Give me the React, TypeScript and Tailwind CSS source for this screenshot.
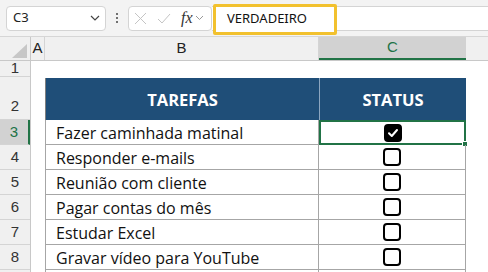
import React from "react";

const tasks = [
  { n: 3, text: "Fazer caminhada matinal", done: true },
  { n: 4, text: "Responder e-mails", done: false },
  { n: 5, text: "Reunião com cliente", done: false },
  { n: 6, text: "Pagar contas do mês", done: false },
  { n: 7, text: "Estudar Excel", done: false },
  { n: 8, text: "Gravar vídeo para YouTube", done: false },
];

function Checkbox({ checked }: { checked: boolean }) {
  return (
    <div
      className={
        "w-[18px] h-[18px] rounded-[4px] border-2 border-black flex items-center justify-center " +
        (checked ? "bg-black" : "bg-white")
      }
    >
      {checked && (
        <svg width="12" height="12" viewBox="0 0 12 12">
          <path d="M2 6.2 L4.8 9 L10 3" fill="none" stroke="white" strokeWidth="2" strokeLinecap="round" strokeLinejoin="round" />
        </svg>
      )}
    </div>
  );
}

export default function App() {
  return (
    <div className="w-[488px] h-[272px] overflow-hidden bg-white" style={{ fontFamily: "'Noto Sans', 'Liberation Sans', sans-serif" }}>
      {/* Formula bar */}
      <div className="h-[37px] bg-[#f3f3f3] flex items-center pl-[6px] border-b border-[#d6d6d6]">
        <div className="w-[100px] h-[25px] bg-white border border-[#d4d4d4] rounded-[4px] flex items-center justify-between pl-[6px] pr-[5px] text-[13px] text-[#222]">
          <span>C3</span>
          <svg width="10" height="6" viewBox="0 0 10 6">
            <path d="M1 1 L5 5 L9 1" fill="none" stroke="#444" strokeWidth="1.2" />
          </svg>
        </div>
        <div className="w-[22px] flex flex-col items-center justify-center gap-[2px]">
          <span className="w-[2px] h-[2px] bg-[#444] rounded-full" />
          <span className="w-[2px] h-[2px] bg-[#444] rounded-full" />
          <span className="w-[2px] h-[2px] bg-[#444] rounded-full" />
        </div>
        <div className="w-[84px] h-[25px] bg-white border border-[#d4d4d4] rounded-[4px] flex items-center pl-[5px] gap-[10px]">
          <svg width="13" height="13" viewBox="0 0 13 13">
            <path d="M1 1 L12 12 M12 1 L1 12" stroke="#c4c4c4" strokeWidth="1" />
          </svg>
          <svg width="14" height="11" viewBox="0 0 14 11">
            <path d="M1 6 L5 10 L13 1" fill="none" stroke="#c4c4c4" strokeWidth="1" />
          </svg>
          <div className="flex items-center gap-[2px]">
            <span className="italic text-[16px] text-[#333] leading-none" style={{ fontFamily: "'Liberation Serif', serif" }}>fx</span>
            <svg width="9" height="6" viewBox="0 0 9 6">
              <path d="M1 1 L4.5 4.5 L8 1" fill="none" stroke="#999" strokeWidth="1" />
            </svg>
          </div>
        </div>
        <div className="flex-1 h-[25px] bg-white border-y border-[#d4d4d4] relative">
          <div className="absolute left-[1px] top-[-3px] w-[124px] h-[31px] border-[3px] border-[#f2c12e] rounded-[2px] bg-white flex items-center pl-[11px] text-[13px] text-[#111]">
            VERDADEIRO
          </div>
        </div>
      </div>

      {/* Column headers */}
      <div className="flex h-[24px] bg-[#f0f0f0] border-b border-[#c8c8c8] text-[15px] text-[#222]" style={{ fontFamily: "'Liberation Sans', sans-serif" }}>
        <div className="w-[31px] border-r border-[#c8c8c8] relative">
          <svg className="absolute left-[12px] top-[7px]" width="15" height="14" viewBox="0 0 15 14">
            <path d="M15 0 L15 14 L0 14 Z" fill="#c7c7c7" />
          </svg>
        </div>
        <div className="w-[14px] border-r border-[#d4d4d4] flex items-center justify-center">A</div>
        <div className="w-[274px] border-r border-[#d4d4d4] flex items-center justify-center">B</div>
        <div className="w-[147px] bg-[#d2d2d2] border-b-2 border-[#217346] text-[#217346] flex items-center justify-center">C</div>
        <div className="flex-1" />
      </div>

      {/* Rows */}
      <div className="flex">
        <div className="w-[31px] bg-[#f0f0f0] border-r border-[#c8c8c8] text-[15px] text-[#333]" style={{ fontFamily: "'Liberation Sans', sans-serif" }}>
          <div className="h-[16px] flex items-center justify-center border-b border-[#d4d4d4]">1</div>
          <div className="h-[43px] flex items-end justify-center pb-[2px] border-b border-[#d4d4d4]">2</div>
          {tasks.map((t) => (
            <div
              key={t.n}
              className={
                "h-[25px] flex items-center justify-center border-b border-[#d4d4d4] " +
                (t.done ? "bg-[#d2d2d2] text-[#217346] border-r-2 border-r-[#217346]" : "")
              }
            >
              {t.n}
            </div>
          ))}
          <div className="h-[25px] border-b border-[#d4d4d4]" />
        </div>
        <div className="w-[14px]" />
        <div className="w-[421px] pt-[17px]" style={{ fontFamily: "'Open Sans', 'Noto Sans', sans-serif" }}>
          <div className="flex h-[42px] bg-[#1f4e78] text-white font-bold text-[16.5px] border-l border-[#7f7f7f]">
            <div className="w-[274px] border-r border-[#8ca6c0] flex items-center justify-center pt-[2px]">TAREFAS</div>
            <div className="flex-1 flex items-center justify-center pt-[2px]">STATUS</div>
          </div>
          {tasks.map((t) => (
            <div key={t.n} className="flex h-[25px] text-[16px] text-[#111]">
              <div className="w-[274px] border-l border-r border-b border-[#a6a6a6] pl-[10px] flex items-center pt-[1px]">{t.text}</div>
              <div
                className={
                  "flex-1 flex items-center justify-center relative " +
                  (t.done ? "border-2 border-[#217346]" : "border-r border-b border-[#a6a6a6]")
                }
              >
                <Checkbox checked={t.done} />
                {t.done && <span className="absolute right-[-4px] bottom-[-4px] w-[6px] h-[6px] bg-[#217346] border border-white" />}
              </div>
            </div>
          ))}
          <div className="flex h-[25px]">
            <div className="w-[274px] border-l border-r border-[#a6a6a6]" />
            <div className="flex-1 border-r border-[#a6a6a6]" />
          </div>
        </div>
      </div>
    </div>
  );
}
